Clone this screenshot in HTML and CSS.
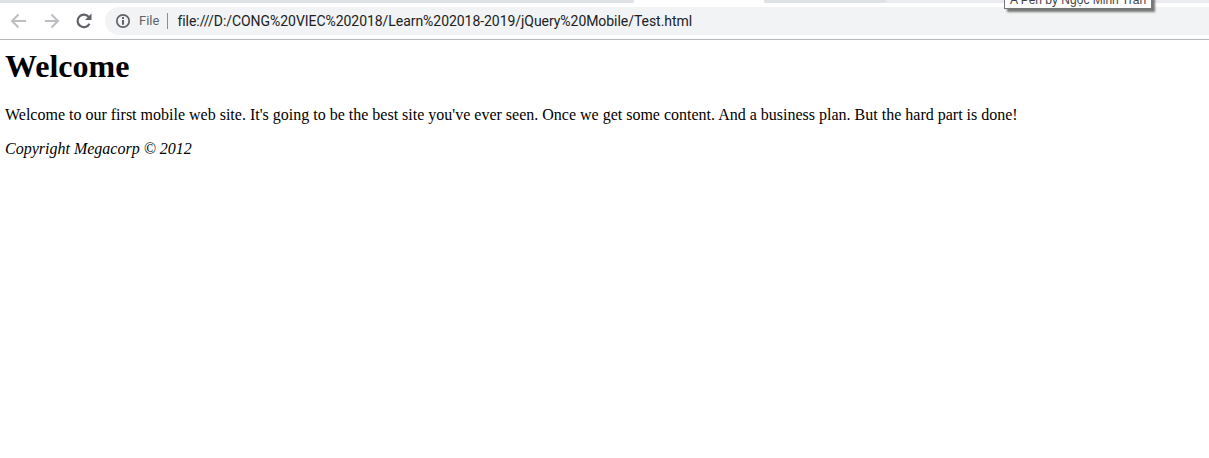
FILE: index.html
```html
<!DOCTYPE html>
<html lang="en">
<head>
<meta charset="utf-8">
<title>Test</title>
<link rel="stylesheet" href="styles.css">
</head>
<body>
<div class="tabstrip">
  <div class="tab tab-left"></div>
  <div class="tab tab-active"></div>
  <div class="tab tab-right"></div>
</div>
<div class="toolbar">
  <svg class="nav nav-back" width="18" height="18" viewBox="0 0 18 18"><path d="M17 9H3.500M9.500 2.500L3 9l6.500 6.500" fill="none" stroke="#bcbec1" stroke-width="2"/></svg>
  <svg class="nav nav-forward" width="18" height="18" viewBox="0 0 18 18"><path d="M2 9h13M8.500 2.500L15 9l-6.500 6.500" fill="none" stroke="#bcbec1" stroke-width="2"/></svg>
  <svg class="nav nav-reload" width="18" height="18" viewBox="0 0 18 18"><path d="M14.500 11.800A6.300 6.300 0 1 1 14 5.200" fill="none" stroke="#5f6368" stroke-width="2.200"/><path d="M16.500 1.500v6.500H10z" fill="#5f6368"/></svg>
  <div class="omnibox">
    <svg class="info" width="16" height="16" viewBox="0 0 16 16"><circle cx="8" cy="8" r="6.200" fill="none" stroke="#5f6368" stroke-width="1.700"/><path d="M7 7h2v4.800H7zM7 4h2v2H7z" fill="#5f6368"/></svg>
    <span class="scheme">File</span>
    <span class="divider"></span>
    <span class="url">file:///D:/CONG%20VIEC%202018/Learn%202018-2019/jQuery%20Mobile/Test.html</span>
  </div>
</div>
<main class="page">
  <h1>Welcome</h1>
  <p>Welcome to our first mobile web site. It's going to be the best site you've ever seen. Once we get some content. And a business plan. But the hard part is done!</p>
  <p><em>Copyright Megacorp © 2012</em></p>
</main>
<div class="tooltip">A Pen by Ngọc Minh Trần</div>
</body>
</html>
```
FILE: styles.css
```css
* { box-sizing: border-box; }
html, body { margin: 0; height: 100%; background: #fff; overflow: hidden; }
body { font-family: "Liberation Serif", serif; color: #000; }
.tabstrip { height: 3px; background: #e9ebee; display: flex; overflow: hidden; }
.tab { height: 3px; }
.tab-left { width: 634px; background: #dee1e6; border-bottom-right-radius: 3px; }
.tab-active { width: 130px; background: #fff; }
.tab-right { width: 122px; background: #dee1e6; border-radius: 0 0 3px 3px; }
.toolbar { height: 37px; background: #fff; border-bottom: 1px solid #b6b8ba; display: flex; align-items: center; padding: 0 0 1px 9px; }
.nav { flex: none; }
.nav-back { margin-right: 16px; }
.nav-forward { margin-right: 14px; }
.nav-reload { margin-right: 12px; }
.omnibox { flex: 1; height: 28px; background: #f1f3f4; border-radius: 14px 0 0 14px; display: flex; align-items: center; padding-left: 10px; font: 13px "Roboto", "Liberation Sans", sans-serif; }
.info { flex: none; margin-right: 8px; }
.scheme { color: #5f6368; }
.divider { width: 1px; height: 16px; background: #8b8e92; margin: 0 9px 0 8px; }
.url { color: #202124; font-size: 14px; letter-spacing: -0.05px; }
.page { padding: 0 5px; font-size: 16px; }
h1 { font-size: 32px; margin: 8px 0 21px; line-height: 37px; font-weight: bold; }
p { margin: 16px 0; line-height: 18px; }
.tooltip { position: absolute; top: -8px; left: 1004px; width: 148px; height: 17px; background: #fff; border: 1px solid #767676; box-shadow: 3px 3px 2px #777; font: 12px "Liberation Sans", sans-serif; color: #444; padding-left: 5px; white-space: nowrap; line-height: 15px; }
```
